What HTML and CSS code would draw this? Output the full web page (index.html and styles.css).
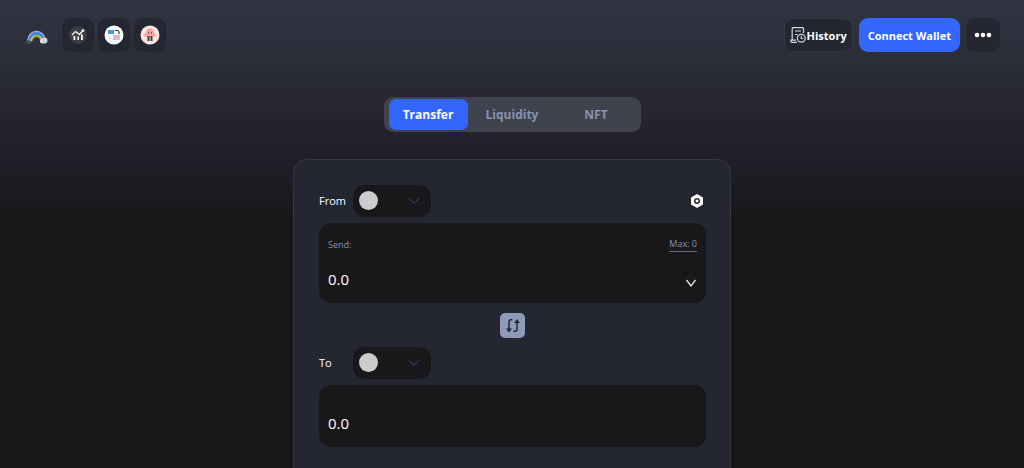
FILE: index.html
```
<!DOCTYPE html>
<html lang="en">

<head>
    <meta charset="utf-8">
    <meta name="viewport" content="width=device-width, initial-scale=1">
    <title>Transfer</title>
    <link rel="stylesheet" href="styles.css">
</head>

<body>
    <header class="header">
        <nav class="apps">
            <a class="logo" href="#" aria-label="Home">
                <svg width="24" height="18" viewBox="0 0 24 18" fill="none">
                    <circle cx="5" cy="15" r="3" fill="#4b4b50" />
                    <path d="M4 14a8.500 8.500 0 0 1 17 0" stroke="#b9a5f5" stroke-width="1.500" />
                    <path d="M5 14.500a7.500 7.500 0 0 1 15 0" stroke="#3f8df2" stroke-width="2" />
                    <path d="M6.500 15a6 6 0 0 1 12 0" stroke="#58c98b" stroke-width="1.500" />
                    <path d="M7.500 15a5 5 0 0 1 10 0" stroke="#f0c85a" stroke-width="1.200" />
                    <path d="M8.500 15a4 4 0 0 1 8 0" stroke="#a5604c" stroke-width="1" />
                    <circle cx="18.500" cy="15" r="2.500" fill="#e4e4e6" />
                    <circle cx="20.500" cy="14.500" r="3" fill="#d3d4d6" />
                </svg>
            </a>
            <a class="app" href="#" aria-label="Statistics">
                <svg width="18" height="18" viewBox="0 0 18 18">
                    <circle cx="9" cy="9" r="9" fill="#3c3d41" />
                    <path d="M3 9l3.500-3.500 4 3L14 4.500" fill="none" stroke="#fff" stroke-width="1.300" />
                    <circle cx="14" cy="4.500" r="1.300" fill="#fff" />
                    <path d="M4.500 10h1.800v4H4.500zM8.500 10.500h1.500V14H8.500zM12 8.500h1.800V14H12z" fill="#fff" />
                </svg>
            </a>
            <a class="app" href="#" aria-label="Bridge">
                <svg width="20" height="20" viewBox="0 0 20 20">
                    <circle cx="10" cy="10" r="9.500" fill="#fff" />
                    <path d="M4 5h6v4H4z" fill="#3f9fd6" />
                    <path d="M11 5.500h2.500q1.500 0 1.500 2V9" fill="none" stroke="#2c2c33" stroke-width="1.200" />
                    <path d="M5 10v2q0 2 2.500 2H9" fill="none" stroke="#d6d7e4" stroke-width="1" />
                    <path d="M9 10h7v5H9z" fill="#d6b6ee" />
                    <path d="M10 10h5l-2.500 2z" fill="#f3bd4a" />
                </svg>
            </a>
            <a class="app" href="#" aria-label="Mushroom">
                <svg width="20" height="20" viewBox="0 0 20 20">
                    <circle cx="10" cy="10" r="9.500" fill="#fbe4e0" />
                    <path d="M3.500 11q0-2 2.500-3 0-4.500 4-4.500t4 4.500q2.500 1 2.500 3l-3 1h-7z" fill="#f1a89d" />
                    <path d="M8 7h1v1.500H8zM11 7h1v1.500h-1z" fill="#5f4345" />
                    <path d="M7.500 11h2v5h-2zM10.500 11h2v5h-2z" fill="#473b3d" />
                </svg>
            </a>
        </nav>

        <div class="actions">
            <button type="button" class="btn btn-history">
                <svg width="16" height="16" viewBox="0 0 16 16" fill="none" stroke="#d6d7da" stroke-width="1.200">
                    <path d="M13.500 6V1.500q0-.8-.8-.8H3q-.8 0-.8.8V13.500M7 15.300H2Q.8 15.300.8 14v-.8H6" />
                    <path d="M5 4h6M5 7.500h2.500" />
                    <circle cx="11.300" cy="11.300" r="3.900" />
                    <path d="M11.300 9v2.500h2" />
                </svg>
                History
            </button>
            <button type="button" class="btn btn-connect">Connect Wallet</button>
            <button type="button" class="btn btn-more" aria-label="More">
                <svg width="18" height="6" viewBox="0 0 18 6" fill="#fff">
                    <circle cx="3" cy="3" r="2.300" />
                    <circle cx="9" cy="3" r="2.300" />
                    <circle cx="15" cy="3" r="2.300" />
                </svg>
            </button>
        </div>
    </header>

    <main class="main">
        <nav class="tabs">
            <button type="button" class="tab active">Transfer</button>
            <button type="button" class="tab">Liquidity</button>
            <button type="button" class="tab">NFT</button>
        </nav>

        <section class="card">
            <div class="row">
                <label class="row-label" for="fromChain">From</label>
                <div class="chain">
                    <select id="fromChain">
                        <option></option>
                    </select>
                    <span class="chain-dot"></span>
                    <svg class="chain-arrow" width="12" height="8" viewBox="0 0 12 8" fill="none" stroke="#2b3259" stroke-width="1.400">
                        <path d="M1 1.500l5 4.500 5-4.500" />
                    </svg>
                </div>
                <button type="button" class="icon-btn settings" aria-label="Settings">
                    <svg width="14" height="14" viewBox="0 0 14 14">
                        <path d="M7 1l5.200 3v6L7 13l-5.200-3V4z" fill="#fff" stroke="#fff" stroke-width="1.500" stroke-linejoin="round" />
                        <circle cx="7" cy="7" r="2.200" fill="none" stroke="#242631" stroke-width="1.500" />
                    </svg>
                </button>
            </div>

            <div class="box">
                <div class="box-line">
                    <label for="sendAmount">Send:</label>
                    <button type="button" class="max">Max: 0</button>
                </div>
                <div class="box-line">
                    <input type="text" id="sendAmount" class="amount" placeholder="0.0">
                    <button type="button" class="icon-btn token" aria-label="Select token">
                        <svg width="12" height="10" viewBox="0 0 12 10" fill="none" stroke="#e6e6e6" stroke-width="1.300">
                            <path d="M1.500 2L6 8l4.500-6" />
                        </svg>
                    </button>
                </div>
            </div>

            <button type="button" class="swap" aria-label="Swap direction">
                <svg width="16" height="16" viewBox="0 0 16 16">
                    <path d="M7.500 1.800H6q-2 0-2 2V11M8.500 13.200H10q2 0 2-2V5" fill="none" stroke="#242631" stroke-width="1.500" />
                    <path d="M1 10.500h6l-3 4zM9 5h6l-3-4z" fill="#242631" />
                </svg>
            </button>

            <div class="row">
                <label class="row-label" for="toChain">To</label>
                <div class="chain">
                    <select id="toChain">
                        <option></option>
                    </select>
                    <span class="chain-dot"></span>
                    <svg class="chain-arrow" width="12" height="8" viewBox="0 0 12 8" fill="none" stroke="#2b3259" stroke-width="1.400">
                        <path d="M1 1.500l5 4.500 5-4.500" />
                    </svg>
                </div>
            </div>

            <div class="box box-receive">
                <input type="text" class="amount" placeholder="0.0" aria-label="Receive amount" readonly>
            </div>
        </section>
    </main>
</body>

</html>
```

FILE: styles.css
```
* {
    box-sizing: border-box;
}

body {
    margin: 0;
    min-height: 100vh;
    font-family: "Open Sans", "Noto Sans", sans-serif;
    color: #ffffff;
    background: #18181a linear-gradient(#303342 0, #2b2d39 60px, #22232d 130px, #18181a 220px) no-repeat;
}

button,
input,
select {
    font-family: inherit;
    border: none;
    padding: 0;
    margin: 0;
}

button {
    cursor: pointer;
}

svg {
    display: block;
    flex-shrink: 0;
}

.header {
    display: flex;
    justify-content: space-between;
    align-items: center;
    padding: 18px 24px 0;
}

.apps {
    display: flex;
    align-items: center;
    gap: 4px;
}

.logo {
    margin-right: 10px;
}

.app {
    display: flex;
    align-items: center;
    justify-content: center;
    width: 32px;
    height: 34px;
    border-radius: 9px;
    background: #242631;
}

.actions {
    display: flex;
    gap: 6px;
}

.btn {
    display: flex;
    align-items: center;
    justify-content: center;
    height: 34px;
    border-radius: 9px;
    font-size: 11px;
    font-weight: 700;
    color: #ffffff;
    background: #242631;
}

.btn-history {
    gap: 1px;
    padding: 0 5px;
    border: 1px solid #343640;
}

.btn-connect {
    padding: 0 9px;
    background: #3366ff;
}

.btn-more {
    width: 34px;
}

.main {
    display: flex;
    flex-direction: column;
    align-items: center;
    padding: 45px 16px 0;
}

.tabs {
    display: flex;
    gap: 5px;
    padding: 2px 5px;
    border-radius: 9px;
    background: #40424e;
}

.tab {
    width: 79px;
    height: 31px;
    border-radius: 7px;
    font-size: 12px;
    font-weight: 700;
    color: #8793b2;
    background: none;
}

.tab.active {
    color: #ffffff;
    background: #3366ff;
}

.card {
    width: 100%;
    max-width: 438px;
    margin-top: 27px;
    padding: 25px 24px 21px 25px;
    border: 1px solid #343640;
    border-bottom: none;
    border-radius: 14px 14px 0 0;
    background: #242631;
}

.row {
    display: flex;
    align-items: center;
}

.row-label {
    width: 34px;
    padding-bottom: 1px;
    font-size: 11px;
}

.chain {
    position: relative;
    width: 78px;
    height: 32px;
}

.chain select {
    appearance: none;
    width: 100%;
    height: 100%;
    border-radius: 12px;
    color: #ffffff;
    background: #18181a;
}

.chain-dot {
    position: absolute;
    top: 6px;
    left: 6px;
    width: 19px;
    height: 19px;
    border-radius: 50%;
    background: #cccccc;
    pointer-events: none;
}

.chain-arrow {
    position: absolute;
    top: 12px;
    right: 11px;
    pointer-events: none;
}

.icon-btn {
    background: none;
}

.settings {
    margin-left: auto;
    margin-right: 2px;
}

.box {
    display: flex;
    flex-direction: column;
    justify-content: space-between;
    height: 80px;
    margin-top: 6px;
    padding: 14px 9px 12px;
    border-radius: 12px;
    background: #18181a;
}

.box-line {
    display: flex;
    align-items: center;
    justify-content: space-between;
    font-size: 9px;
    color: #8793b2;
}

.max {
    font-size: 9px;
    line-height: 14px;
    color: #8793b2;
    background: none;
    border-bottom: 1px solid #626a80;
}

.token {
    padding-top: 8px;
}

.amount {
    width: 100%;
    min-width: 0;
    height: 24px;
    font-size: 15px;
    color: #ffffff;
    background: none;
    outline: none;
}

.amount::placeholder {
    color: #ffffff;
    opacity: 1;
}

.box-receive {
    justify-content: flex-end;
    height: 62px;
}

.swap {
    display: flex;
    align-items: center;
    justify-content: center;
    width: 25px;
    height: 25px;
    margin: 10px auto 9px;
    border-radius: 5px;
    background: #8e9bb8;
}
```
